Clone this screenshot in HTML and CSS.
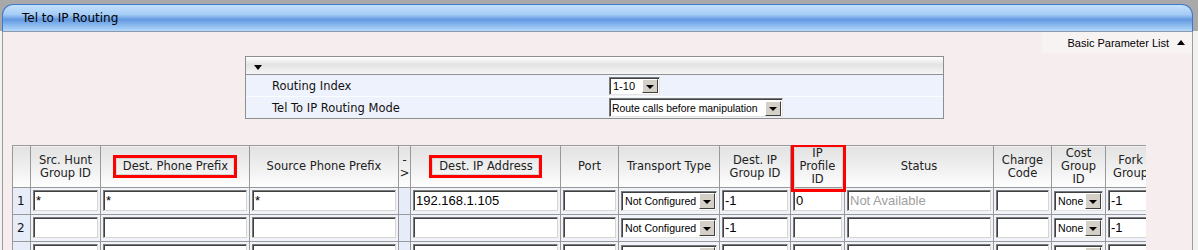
FILE: index.html
```html
<!DOCTYPE html>
<html lang="en">
<head>
  <meta charset="UTF-8">
  <title>Tel to IP Routing</title>
  <link rel="stylesheet" href="styles.css">
</head>
<body>
  <div class="panel">
    <div class="panel-title">Tel to IP Routing</div>
    <div class="panel-body">

      <!-- Parameter list toggle -->
      <div class="param-toggle">
        <span class="param-link">Basic Parameter List <span class="up-arrow"></span></span>
      </div>

      <!-- Basic parameters -->
      <div class="param-box">
        <div class="param-head"><span class="down-arrow"></span></div>
        <div class="param-row">
          <span class="param-label">Routing Index</span>
          <span class="sel sel-index"><span class="sel-text">1-10</span><span class="sel-btn"></span></span>
        </div>
        <div class="param-row">
          <span class="param-label">Tel To IP Routing Mode</span>
          <span class="sel sel-mode"><span class="sel-text">Route calls before manipulation</span><span class="sel-btn"></span></span>
        </div>
      </div>

      <!-- Routing table -->
      <div class="table-wrap">
        <table class="routing">
          <colgroup>
            <col class="c-num">
            <col class="c-hunt">
            <col class="c-prefix">
            <col class="c-prefix">
            <col class="c-arrow">
            <col class="c-ip">
            <col class="c-port">
            <col class="c-transport">
            <col class="c-group">
            <col class="c-profile">
            <col class="c-status">
            <col class="c-charge">
            <col class="c-cost">
            <col class="c-fork">
          </colgroup>
          <thead>
            <tr>
              <th></th>
              <th>Src. Hunt<br>Group ID</th>
              <th><span class="mark">Dest. Phone Prefix</span></th>
              <th>Source Phone Prefix</th>
              <th>-<br>&gt;</th>
              <th><span class="mark">Dest. IP Address</span></th>
              <th>Port</th>
              <th>Transport Type</th>
              <th>Dest. IP<br>Group ID</th>
              <th class="mark-cell">IP<br>Profile<br>ID</th>
              <th>Status</th>
              <th>Charge<br>Code</th>
              <th>Cost<br>Group<br>ID</th>
              <th>Fork<br>Group</th>
            </tr>
          </thead>
          <tbody>
            <tr>
              <td class="num">1</td>
              <td><input type="text" value="*"></td>
              <td><input type="text" value="*"></td>
              <td><input type="text" value="*"></td>
              <td class="arrow"></td>
              <td><input type="text" value="192.168.1.105"></td>
              <td><input type="text" value=""></td>
              <td><span class="sel"><span class="sel-text">Not Configured</span><span class="sel-btn"></span></span></td>
              <td><input type="text" value="-1"></td>
              <td><input type="text" value="0"></td>
              <td><input type="text" class="muted" value="Not Available"></td>
              <td><input type="text" value=""></td>
              <td><span class="sel"><span class="sel-text">None</span><span class="sel-btn"></span></span></td>
              <td><input type="text" value="-1"></td>
            </tr>
            <tr>
              <td class="num">2</td>
              <td><input type="text" value=""></td>
              <td><input type="text" value=""></td>
              <td><input type="text" value=""></td>
              <td class="arrow"></td>
              <td><input type="text" value=""></td>
              <td><input type="text" value=""></td>
              <td><span class="sel"><span class="sel-text">Not Configured</span><span class="sel-btn"></span></span></td>
              <td><input type="text" value="-1"></td>
              <td><input type="text" value=""></td>
              <td><input type="text" value=""></td>
              <td><input type="text" value=""></td>
              <td><span class="sel"><span class="sel-text">None</span><span class="sel-btn"></span></span></td>
              <td><input type="text" value="-1"></td>
            </tr>
            <tr>
              <td class="num">3</td>
              <td><input type="text" value=""></td>
              <td><input type="text" value=""></td>
              <td><input type="text" value=""></td>
              <td class="arrow"></td>
              <td><input type="text" value=""></td>
              <td><input type="text" value=""></td>
              <td><span class="sel"><span class="sel-text">Not Configured</span><span class="sel-btn"></span></span></td>
              <td><input type="text" value="-1"></td>
              <td><input type="text" value=""></td>
              <td><input type="text" value=""></td>
              <td><input type="text" value=""></td>
              <td><span class="sel"><span class="sel-text">None</span><span class="sel-btn"></span></span></td>
              <td><input type="text" value="-1"></td>
            </tr>
          </tbody>
        </table>
      </div>

    </div>
  </div>
</body>
</html>
```

FILE: styles.css
```css
body {
  margin: 0;
  font-family: "DejaVu Sans", Verdana, sans-serif;
  font-size: 11.5px;
  color: #111;
  background: linear-gradient(#a9a9a9 0, #a9a9a9 31px, #f2f2f2 31px);
  height: 250px;
  overflow: hidden;
}

.panel {
  margin: 4px 5px 0 2px;
}

/* Title bar */
.panel-title {
  height: 26px;
  line-height: 26px;
  padding-left: 19px;
  border: 1px solid #3f79cf;
  border-bottom: 1px solid #8a9bb0;
  border-radius: 11px 11px 0 0;
  background: linear-gradient(#c4e0fb 0%, #a6cdf6 36%, #6399e2 56%, #86b7ee 76%, #b4d8f9 100%);
  font-size: 12px;
  color: #000;
}

.panel-body {
  background: #f6eeee;
  border-left: 1px solid #9c9c9c;
  border-right: 1px solid #9c9c9c;
  height: 230px;
}

/* Basic Parameter List link */
.param-toggle {
  display: flex;
  justify-content: flex-end;
}

.param-link {
  display: flex;
  align-items: center;
  height: 21px;
  padding: 0 7px 0 26px;
  background: #f8f3f3;
  font-family: "Liberation Sans", Arial, sans-serif;
  font-size: 11px;
  color: #000;
}

.up-arrow {
  margin-left: 8px;
  width: 0;
  height: 0;
  border-left: 4px solid transparent;
  border-right: 4px solid transparent;
  border-bottom: 5px solid #000;
}

/* Parameter box */
.param-box {
  width: 697px;
  margin: 3px 0 0 242px;
  border: 1px solid #8e8e8e;
  background: #eef2fc;
}

.param-head {
  height: 17px;
  border-bottom: 1px solid #929292;
  background: linear-gradient(#ffffff 0%, #e3e3e3 45%, #f6f6f6 100%);
  display: flex;
  align-items: center;
  padding-left: 8px;
}

.down-arrow {
  margin-top: 4px;
  width: 0;
  height: 0;
  border-left: 4px solid transparent;
  border-right: 4px solid transparent;
  border-top: 5px solid #000;
}

.param-row {
  display: flex;
  align-items: center;
  height: 21px;
  border-bottom: 1px solid #fbfcff;
}

.param-row:last-child {
  border-bottom: none;
}

.param-label {
  width: 337px;
  padding-left: 26px;
}

/* Fake classic drop-down */
.sel {
  display: inline-flex;
  align-items: center;
  height: 20px;
  width: 100%;
  box-sizing: border-box;
  border: 1px solid;
  border-color: #7a7a7a #e6e4de #e6e4de #7a7a7a;
  box-shadow: inset 1px 1px 0 #404040;
  background: #fff;
  padding-left: 3px;
  font-family: "Liberation Sans", Arial, sans-serif;
  font-size: 10.6px;
  color: #000;
  white-space: nowrap;
  overflow: hidden;
}

.sel-text {
  flex: 1;
  padding-top: 1px;
}

.sel-btn {
  width: 16px;
  height: 16px;
  margin: 1px 1px 0 1px;
  box-sizing: border-box;
  background: #d4d0c8;
  border: 1px solid;
  border-color: #ffffff #404040 #404040 #ffffff;
  display: flex;
  align-items: center;
  justify-content: center;
  flex: none;
}

.sel-btn::after {
  content: "";
  border-left: 4px solid transparent;
  border-right: 4px solid transparent;
  border-top: 4px solid #000;
  margin-top: 1px;
}

.sel-index {
  width: 51px;
  height: 18px;
  font-size: 11px;
}

.sel-index .sel-btn {
  height: 14px;
}

.sel-mode {
  width: 174px;
  height: 19px;
  padding-left: 2px;
  font-size: 10.4px;
}

.sel-mode .sel-btn {
  height: 15px;
}

/* Routing table */
.table-wrap {
  width: 1134px;
  margin: 26px 0 0 9px;
  overflow: hidden;
}

.routing {
  width: 1143px;
  table-layout: fixed;
  border-collapse: collapse;
}

.c-num { width: 18px; }
.c-hunt { width: 70px; }
.c-prefix { width: 149px; }
.c-arrow { width: 12px; }
.c-ip { width: 150px; }
.c-port { width: 58px; }
.c-transport { width: 101px; }
.c-group { width: 71px; }
.c-profile { width: 54px; }
.c-status { width: 149px; }
.c-charge { width: 58px; }
.c-cost { width: 54px; }
.c-fork { width: 50px; }

.routing th,
.routing td {
  border: 1px solid #999;
}

.routing th {
  height: 38px;
  padding: 1px 0;
  font-weight: normal;
  line-height: 13px;
  color: #222;
  text-align: center;
  vertical-align: middle;
  background: linear-gradient(#e2e2e2 0%, #ececec 40%, #f8f8f8 80%, #fdfdfd 100%);
  white-space: nowrap;
  overflow: hidden;
}

.mark {
  display: inline-block;
  padding: 2px 6px 2px 7px;
  border: 3px solid #ff0000;
  box-shadow: inset 0 0 0 1px #d6d6d6;
}

.routing th.mark-cell {
  position: relative;
  overflow: visible;
}

.mark-cell::after {
  content: "";
  position: absolute;
  top: -2px;
  left: 0;
  right: -2px;
  bottom: -5px;
  border: 3px solid #ff0000;
  box-shadow: inset 0 0 0 1px #d6d6d6;
  z-index: 1;
}

.routing td {
  height: 21px;
  padding: 2px 2px 3px;
  background: #f1f3fa;
}

.routing td.num {
  padding-left: 4px;
  font-size: 12px;
  color: #111;
  background: #e6ecf8;
}

.routing td.arrow {
  background: #e6ecf8;
}

.routing input {
  display: block;
  width: 100%;
  height: 21px;
  margin: 0;
  box-sizing: border-box;
  border: 1px solid;
  border-color: #7a7a7a #d8d5ce #d8d5ce #7a7a7a;
  box-shadow: inset 1px 1px 0 #404040;
  padding: 0 1px 0 2px;
  font-family: "Liberation Sans", Arial, sans-serif;
  font-size: 13px;
  color: #000;
  background: #fff;
}

.routing input.muted {
  color: #a0a0a0;
}
```
